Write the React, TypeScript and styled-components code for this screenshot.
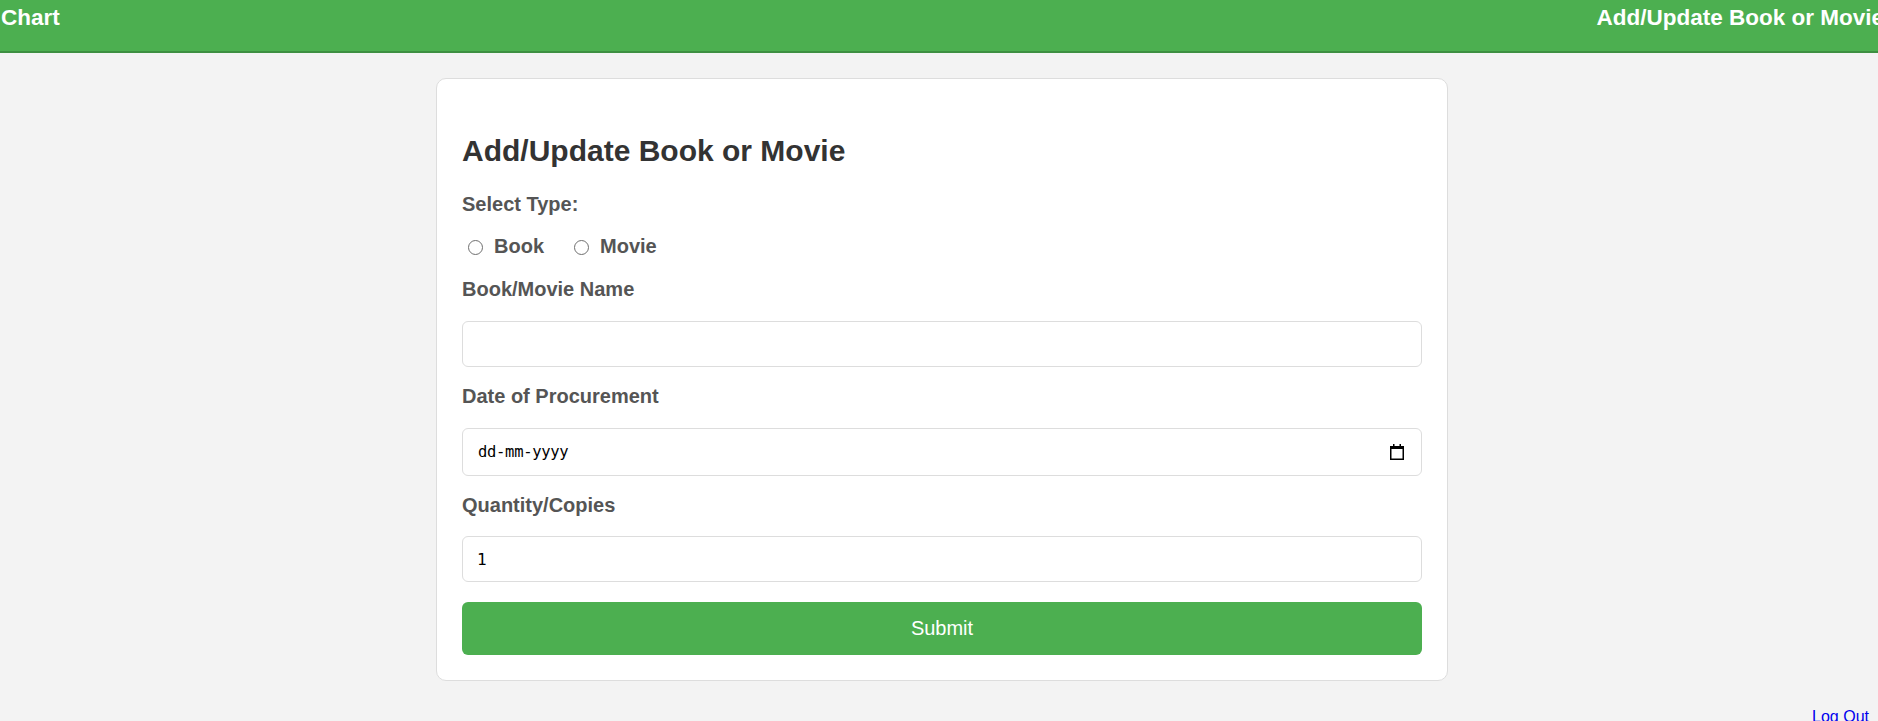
import React from "react";
import styled, { createGlobalStyle } from "styled-components";

const GlobalStyle = createGlobalStyle`
  html, body {
    margin: 0;
    padding: 0;
    overflow-x: hidden;
    background: #f3f3f3;
    font-family: "Liberation Sans", Arial, sans-serif;
  }
`;

const Page = styled.div`
  width: calc(100% + 6px);
  min-height: 721px;
  background: #f3f3f3;
`;

const Header = styled.header`
  display: flex;
  justify-content: space-between;
  align-items: flex-start;
  box-sizing: border-box;
  height: 53px;
  padding: 5px 0 0 1px;
  background: #4caf50;
  border-bottom: 2px solid #3d8f41;
`;

const HeaderTitle = styled.span`
  color: #ffffff;
  font-size: 22.5px;
  font-weight: bold;
  line-height: 26px;
  white-space: nowrap;
`;

const Card = styled.main`
  box-sizing: border-box;
  width: 1012px;
  margin: 25px auto 0;
  padding: 25px;
  background: #ffffff;
  border: 1px solid #dddddd;
  border-radius: 10px;
  display: flex;
  flex-direction: column;
`;

const Title = styled.h2`
  margin: 30px 0 25px;
  font-size: 30px;
  line-height: 34px;
  font-weight: bold;
  color: #333333;
`;

const Label = styled.label<{ $top?: number }>`
  display: block;
  margin-top: ${(p) => p.$top ?? 0}px;
  font-size: 20px;
  line-height: 23px;
  font-weight: bold;
  color: #555555;
`;

const RadioRow = styled.div`
  display: flex;
  align-items: center;
  height: 23px;
  margin-top: 19px;
`;

const RadioOption = styled.label<{ $gap?: number }>`
  display: flex;
  align-items: center;
  margin-left: ${(p) => p.$gap ?? 0}px;
  font-size: 20px;
  line-height: 23px;
  font-weight: bold;
  color: #555555;
  cursor: pointer;
`;

const RadioCircle = styled.input`
  appearance: none;
  -webkit-appearance: none;
  box-sizing: border-box;
  width: 15px;
  height: 15px;
  margin: 1px 11px 0 6px;
  border: 1px solid #6f6f6f;
  border-radius: 50%;
  background: #ffffff;
`;

const TextInput = styled.input<{ $top?: number }>`
  box-sizing: border-box;
  width: 100%;
  height: 46px;
  margin: ${(p) => p.$top ?? 0}px 0 0;
  padding: 0 14px;
  border: 1px solid #dddddd;
  border-radius: 6px;
  background: #ffffff;
  font-family: "DejaVu Sans Mono", monospace;
  font-size: 16px;
  color: #000000;
  outline: none;
`;

const DateField = styled.div`
  box-sizing: border-box;
  display: flex;
  align-items: center;
  justify-content: space-between;
  height: 48px;
  margin-top: 20px;
  padding: 0 17px 0 15px;
  border: 1px solid #dddddd;
  border-radius: 6px;
  background: #ffffff;
`;

const DateText = styled.span`
  font-family: "DejaVu Sans Mono", monospace;
  font-size: 15.5px;
  color: #000000;
  letter-spacing: -0.3px;
`;

const SubmitButton = styled.button`
  box-sizing: border-box;
  width: 100%;
  height: 53px;
  margin-top: 20px;
  border: none;
  border-radius: 6px;
  background: #4caf50;
  color: #ffffff;
  font-family: "Liberation Sans", Arial, sans-serif;
  font-size: 20px;
  cursor: pointer;
`;

const Footer = styled.div`
  display: flex;
  justify-content: flex-end;
  margin-top: 27px;
  padding-right: 15px;
`;

const LogOut = styled.a`
  color: #0000ee;
  font-size: 16px;
  line-height: 18px;
  text-decoration: none;
`;

const CalendarIcon = () => (
  <svg width="14" height="16" viewBox="0 0 14 16" fill="none">
    <rect x="0.75" y="2.75" width="12.5" height="12.5" stroke="#000" strokeWidth="1.5" fill="#fff" />
    <rect x="0" y="2" width="14" height="3" fill="#000" />
    <rect x="3" y="0" width="1.5" height="3" fill="#000" />
    <rect x="9.5" y="0" width="1.5" height="3" fill="#000" />
  </svg>
);

export default function App() {
  return (
    <>
      <GlobalStyle />
      <Page>
        <Header>
          <HeaderTitle>Chart</HeaderTitle>
          <HeaderTitle>Add/Update Book or Movie</HeaderTitle>
        </Header>
        <Card>
          <Title>Add/Update Book or Movie</Title>
          <Label>Select Type:</Label>
          <RadioRow>
            <RadioOption>
              <RadioCircle type="radio" name="type" />
              Book
            </RadioOption>
            <RadioOption $gap={24}>
              <RadioCircle type="radio" name="type" />
              Movie
            </RadioOption>
          </RadioRow>
          <Label $top={20}>Book/Movie Name</Label>
          <TextInput $top={20} type="text" />
          <Label $top={18}>Date of Procurement</Label>
          <DateField>
            <DateText>dd-mm-yyyy</DateText>
            <CalendarIcon />
          </DateField>
          <Label $top={18}>Quantity/Copies</Label>
          <TextInput $top={19} type="text" defaultValue="1" />
          <SubmitButton type="button">Submit</SubmitButton>
        </Card>
        <Footer>
          <LogOut href="#">Log Out</LogOut>
        </Footer>
      </Page>
    </>
  );
}
